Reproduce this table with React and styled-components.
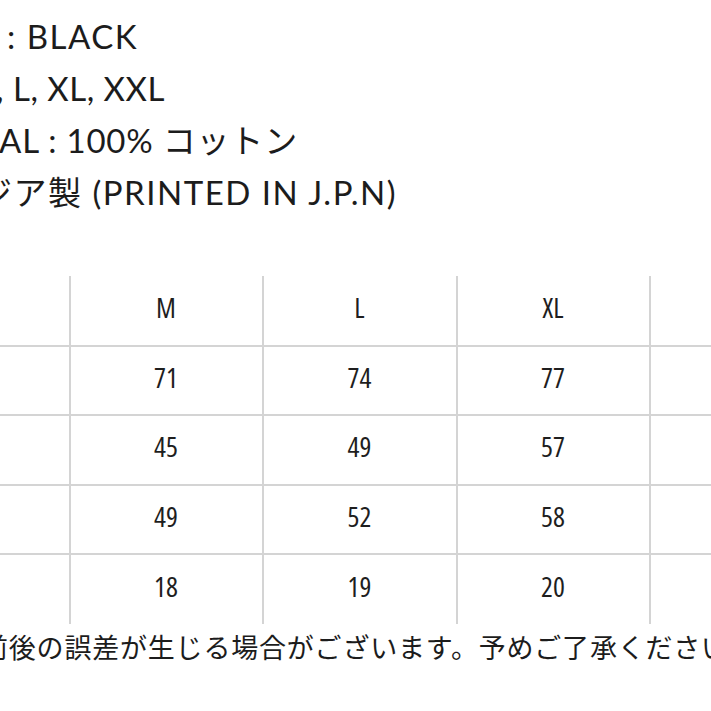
import React from "react";
import styled, { createGlobalStyle } from "styled-components";

const GlobalStyle = createGlobalStyle`
  html, body {
    margin: 0;
    padding: 0;
    background: #ffffff;
  }
`;

const Page = styled.div`
  width: 711px;
  height: 711px;
  overflow: hidden;
  background: #ffffff;
  color: #1c1c1c;
`;

const Specs = styled.div`
  padding-top: 10px;
  display: flex;
  flex-direction: column;
`;

const SpecLine = styled.div`
  font-family: "Lato", "Noto Sans CJK JP", sans-serif;
  font-size: 33px;
  line-height: 52px;
  letter-spacing: ${(p) => p.$spacing ?? 1.5}px;
  white-space: nowrap;
  text-indent: ${(p) => p.$shift || 0}px;
`;

const SizeTable = styled.div`
  margin-top: 58px;
  display: grid;
  grid-template-columns: 70px 193px 194px 193px 1fr;
  grid-auto-rows: 69.5px;
`;

const Cell = styled.div`
  display: flex;
  align-items: center;
  justify-content: center;
  padding-bottom: 6px;
  font-family: "Open Sans", "Liberation Sans", sans-serif;
  font-stretch: 75%;
  font-weight: 400;
  font-size: 28px;
  color: #1e1e1e;
  border-right: ${(p) => (p.$lastCol ? "none" : "2px solid #d4d4d4")};
  border-bottom: ${(p) => (p.$lastRow ? "none" : "2px solid #d4d4d4")};
  margin-right: ${(p) => (p.$lastCol ? 0 : -1)}px;
  margin-bottom: ${(p) => (p.$lastRow ? 0 : -1)}px;
`;

const Note = styled.div`
  margin-top: 5px;
  font-family: "Noto Sans CJK JP", sans-serif;
  font-size: 27px;
  line-height: 36px;
  letter-spacing: 0.8px;
  white-space: nowrap;
  text-indent: -19px;
  color: #1c1c1c;
`;

const rows = [
  ["", "M", "L", "XL", ""],
  ["", "71", "74", "77", ""],
  ["", "45", "49", "57", ""],
  ["", "49", "52", "58", ""],
  ["", "18", "19", "20", ""],
];

function App() {
  return (
    <>
      <GlobalStyle />
      <Page>
        <Specs>
          <SpecLine $shift={7}>: BLACK</SpecLine>
          <SpecLine $shift={-4} $spacing={0.5}>, L, XL, XXL</SpecLine>
          <SpecLine $shift={-1} $spacing={0.8}>AL : 100% コットン</SpecLine>
          <SpecLine $shift={-21}>ジア製 (PRINTED IN J.P.N)</SpecLine>
        </Specs>
        <SizeTable>
          {rows.map((row, r) =>
            row.map((val, c) => (
              <Cell
                key={`${r}-${c}`}
                $lastCol={c === row.length - 1}
                $lastRow={r === rows.length - 1}
              >
                {val}
              </Cell>
            ))
          )}
        </SizeTable>
        <Note>前後の誤差が生じる場合がございます。予めご了承ください。</Note>
      </Page>
    </>
  );
}

export default App;
